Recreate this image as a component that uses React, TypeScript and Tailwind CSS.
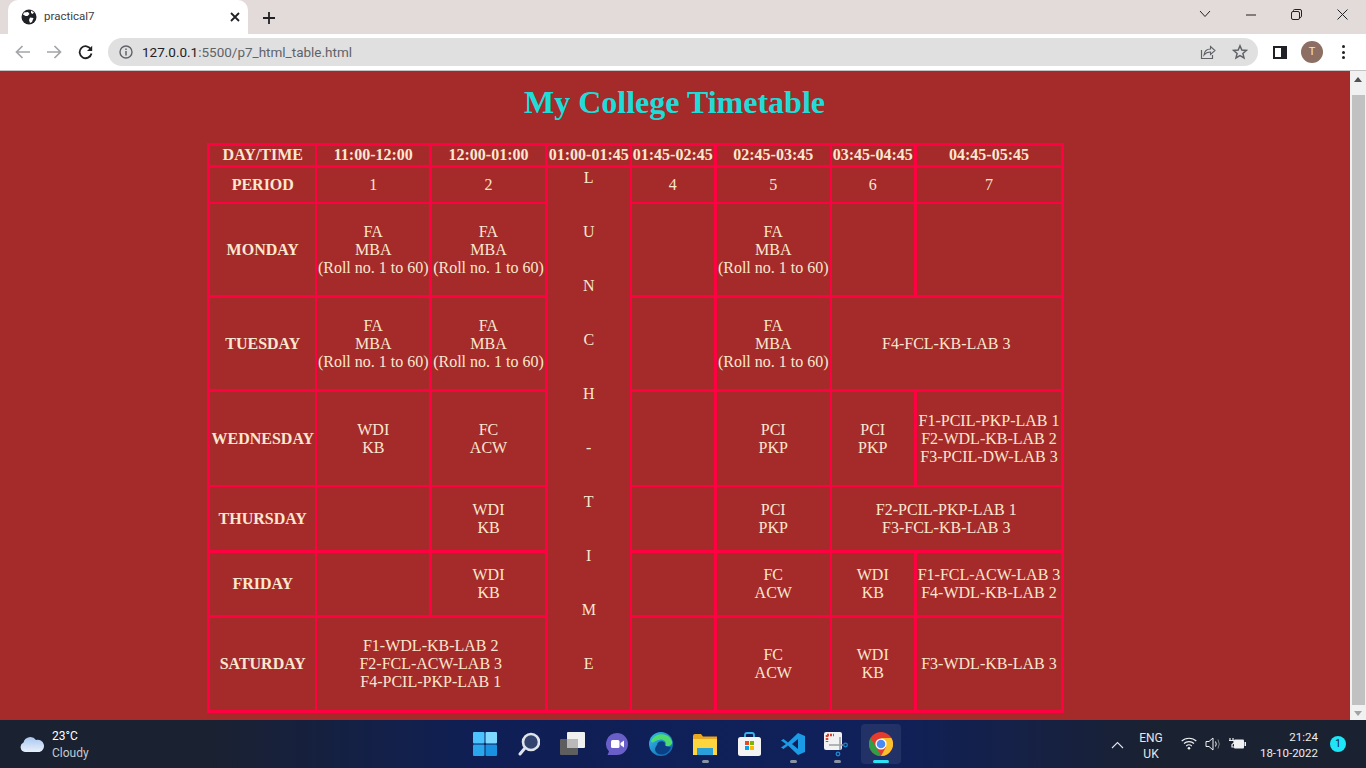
import React from "react";

const Br = ({ lines }: { lines: string[] }) => (
  <>
    {lines.map((l, i) => (
      <React.Fragment key={i}>
        {i > 0 && <br />}
        {l}
      </React.Fragment>
    ))}
  </>
);

const thinV = [1, 4, 6];
const thinH = [2, 5];

type CellProps = {
  c: number;
  r: number;
  cs?: number;
  rs?: number;
  head?: boolean;
  top?: boolean;
  lines?: string[];
  children?: React.ReactNode;
};

function Cell({ c, r, cs = 1, rs = 1, head, top, lines, children }: CellProps) {
  const cls = [
    "border-solid border-[#ff0040] p-0 text-[#f9e7cf] text-center",
    top ? "align-top" : "align-middle",
    head ? "font-bold" : "font-normal",
    r === 0 ? "pb-[1px]" : "",
    r === 2 || r === 4 || r === 5 ? "pt-[2px]" : "",
    c <= 1 && cs === 1 ? "pl-[1px]" : "",
    thinV.includes(c) ? "border-l-2" : "border-l-[3px]",
    thinV.includes(c + cs) ? "border-r-2" : "border-r-[3px]",
    thinH.includes(r) ? "border-t-2" : "border-t-[3px]",
    thinH.includes(r + rs) ? "border-b-2" : "border-b-[3px]",
  ].join(" ");
  return (
    <td colSpan={cs} rowSpan={rs} className={cls}>
      {lines ? <Br lines={lines} /> : children}
    </td>
  );
}

const FA = ["FA", "MBA", "(Roll no. 1 to 60)"];
const HEAD = ["DAY/TIME", "11:00-12:00", "12:00-01:00", "01:00-01:45", "01:45-02:45", "02:45-03:45", "03:45-04:45", "04:45-05:45"];

function Table() {
  const lunch = "LUNCH-TIME".split("");
  return (
    <table className="border-collapse table-fixed w-[854px] ml-[207px] text-[16px] leading-[18px]">
      <colgroup>
        <col className="w-[107px]" />
        <col className="w-[115px]" />
        <col className="w-[116px]" />
        <col className="w-[84px]" />
        <col className="w-[85px]" />
        <col className="w-[115px]" />
        <col className="w-[85px]" />
        <col className="w-[147px]" />
      </colgroup>
      <tbody>
        <tr className="h-[22px]">
          {HEAD.map((h, i) => (
            <Cell key={h} c={i} r={0} head lines={[h]} />
          ))}
        </tr>
        <tr className="h-[36px]">
          <Cell c={0} r={1} head lines={["PERIOD"]} />
          <Cell c={1} r={1} lines={["1"]} />
          <Cell c={2} r={1} lines={["2"]} />
          <Cell c={3} r={1} rs={7} top>
            <div className="pt-[1px]">
              {lunch.map((c, i) => (
                <div key={i} className="h-[54px]">{c}</div>
              ))}
            </div>
          </Cell>
          <Cell c={4} r={1} lines={["4"]} />
          <Cell c={5} r={1} lines={["5"]} />
          <Cell c={6} r={1} lines={["6"]} />
          <Cell c={7} r={1} lines={["7"]} />
        </tr>
        <tr className="h-[94px]">
          <Cell c={0} r={2} head lines={["MONDAY"]} />
          <Cell c={1} r={2} lines={FA} />
          <Cell c={2} r={2} lines={FA} />
          <Cell c={4} r={2} />
          <Cell c={5} r={2} lines={FA} />
          <Cell c={6} r={2} />
          <Cell c={7} r={2} />
        </tr>
        <tr className="h-[94px]">
          <Cell c={0} r={3} head lines={["TUESDAY"]} />
          <Cell c={1} r={3} lines={FA} />
          <Cell c={2} r={3} lines={FA} />
          <Cell c={4} r={3} />
          <Cell c={5} r={3} lines={FA} />
          <Cell c={6} r={3} cs={2} lines={["F4-FCL-KB-LAB 3"]} />
        </tr>
        <tr className="h-[95px]">
          <Cell c={0} r={4} head lines={["WEDNESDAY"]} />
          <Cell c={1} r={4} lines={["WDI", "KB"]} />
          <Cell c={2} r={4} lines={["FC", "ACW"]} />
          <Cell c={4} r={4} />
          <Cell c={5} r={4} lines={["PCI", "PKP"]} />
          <Cell c={6} r={4} lines={["PCI", "PKP"]} />
          <Cell c={7} r={4} lines={["F1-PCIL-PKP-LAB 1", "F2-WDL-KB-LAB 2", "F3-PCIL-DW-LAB 3"]} />
        </tr>
        <tr className="h-[66px]">
          <Cell c={0} r={5} head lines={["THURSDAY"]} />
          <Cell c={1} r={5} />
          <Cell c={2} r={5} lines={["WDI", "KB"]} />
          <Cell c={4} r={5} />
          <Cell c={5} r={5} lines={["PCI", "PKP"]} />
          <Cell c={6} r={5} cs={2} lines={["F2-PCIL-PKP-LAB 1", "F3-FCL-KB-LAB 3"]} />
        </tr>
        <tr className="h-[65px]">
          <Cell c={0} r={6} head lines={["FRIDAY"]} />
          <Cell c={1} r={6} />
          <Cell c={2} r={6} lines={["WDI", "KB"]} />
          <Cell c={4} r={6} />
          <Cell c={5} r={6} lines={["FC", "ACW"]} />
          <Cell c={6} r={6} lines={["WDI", "KB"]} />
          <Cell c={7} r={6} lines={["F1-FCL-ACW-LAB 3", "F4-WDL-KB-LAB 2"]} />
        </tr>
        <tr className="h-[95px]">
          <Cell c={0} r={7} head lines={["SATURDAY"]} />
          <Cell c={1} r={7} cs={2} lines={["F1-WDL-KB-LAB 2", "F2-FCL-ACW-LAB 3", "F4-PCIL-PKP-LAB 1"]} />
          <Cell c={4} r={7} />
          <Cell c={5} r={7} lines={["FC", "ACW"]} />
          <Cell c={6} r={7} lines={["WDI", "KB"]} />
          <Cell c={7} r={7} lines={["F3-WDL-KB-LAB 3"]} />
        </tr>
      </tbody>
    </table>
  );
}

const TabBar = () => (
  <div className="h-[34px] bg-[#e3dbd9] flex items-end relative">
    <div className="ml-[8px] w-[240px] h-[34px] bg-white rounded-t-[10px] flex items-center relative">
      <svg className="ml-[13px]" width="16" height="16" viewBox="0 0 16 16">
        <circle cx="8" cy="8" r="7.5" fill="#202124" />
        <path d="M3 3.5 L7 3 L8.5 5 L6.5 7 L4.5 7 L2 5.5 Z M9 8.5 L12.5 9 L11 13 L9 14 L8 11 Z M10 1.5 L13 3.5 L11.5 5 L10 4 Z" fill="#fff" />
      </svg>
      <span className="ml-[7px] text-[11.5px] text-[#3c4043] font-['Roboto','Liberation_Sans',sans-serif]">practical7</span>
      <svg className="absolute left-[222px] top-[12px]" width="10" height="10" viewBox="0 0 10 10">
        <path d="M1 1 L9 9 M9 1 L1 9" stroke="#202124" strokeWidth="1.8" />
      </svg>
    </div>
    <svg className="ml-[15px] mb-[10px]" width="12" height="12" viewBox="0 0 12 12">
      <path d="M6 0 V12 M0 6 H12" stroke="#202124" strokeWidth="1.8" />
    </svg>
    <div className="absolute right-0 top-0 h-[30px] flex items-center">
      <svg className="absolute right-[155px] top-[10px]" width="12" height="8" viewBox="0 0 12 8">
        <path d="M1 1 L6 6.5 L11 1" stroke="#202124" fill="none" />
      </svg>
      <svg className="absolute right-[109px] top-[14px]" width="12" height="2" viewBox="0 0 12 2">
        <path d="M1 1 H11" stroke="#202124" />
      </svg>
      <svg className="absolute right-[64px] top-[9px]" width="11" height="11" viewBox="0 0 11 11">
        <rect x="0.5" y="2.5" width="8" height="8" rx="1.5" stroke="#202124" fill="none" />
        <path d="M2.5 2.5 V1.5 Q2.5 0.5 3.5 0.5 H9 Q10.5 0.5 10.5 2 V7.5 Q10.5 8.5 8.5 8.5" stroke="#202124" fill="none" />
      </svg>
      <svg className="absolute right-[18px] top-[9px]" width="11" height="11" viewBox="0 0 11 11">
        <path d="M0.5 0.5 L10.5 10.5 M10.5 0.5 L0.5 10.5" stroke="#202124" />
      </svg>
    </div>
  </div>
);

const Toolbar = () => (
  <div className="h-[37px] bg-white border-b border-[#c4c4c4] flex items-center">
    <svg className="ml-[15px]" width="16" height="14" viewBox="0 0 16 14">
      <path d="M15 7 H2 M7.5 1 L1.5 7 L7.5 13" stroke="#a3a5a8" strokeWidth="1.7" fill="none" />
    </svg>
    <svg className="ml-[15px]" width="16" height="14" viewBox="0 0 16 14">
      <path d="M1 7 H14 M8.5 1 L14.5 7 L8.5 13" stroke="#a3a5a8" strokeWidth="1.7" fill="none" />
    </svg>
    <svg className="ml-[16px]" width="15" height="15" viewBox="0 0 15 15">
      <path d="M13 4.5 A6 6 0 1 0 13.5 8.5" stroke="#202124" strokeWidth="1.8" fill="none" />
      <path d="M14.2 0.8 V6 H9 Z" fill="#202124" />
    </svg>
    <div className="ml-[15px] w-[1150px] h-[28px] rounded-full bg-[#e0e0e0] flex items-center relative">
      <svg className="ml-[11px]" width="14" height="14" viewBox="0 0 14 14">
        <circle cx="7" cy="7" r="6" stroke="#5f6368" strokeWidth="1.4" fill="none" />
        <path d="M7 6 V10.5 M7 3.5 V5" stroke="#5f6368" strokeWidth="1.5" />
      </svg>
      <span className="ml-[9px] text-[13.5px] text-[#5f6368] font-['Roboto','Liberation_Sans',sans-serif]">
        <span className="text-[#202124]">127.0.0.1</span>:5500/p7_html_table.html
      </span>
      <svg className="absolute left-[1092px] top-[6px]" width="16" height="16" viewBox="0 0 16 16">
        <path d="M1.5 6 V14.5 H12.5 V11" stroke="#5f6368" strokeWidth="1.2" fill="none" />
        <path d="M4 11 C4.5 7 7.5 5 10.5 5 V2.5 L15 6.5 L10.5 10.5 V8 C8 8 5.5 9 4 11 Z" stroke="#5f6368" strokeWidth="1.1" fill="none" />
      </svg>
      <svg className="absolute left-[1124px] top-[6px]" width="16" height="16" viewBox="0 0 16 16">
        <path d="M8 1.8 L9.8 6 L14.4 6.4 L10.9 9.4 L12 13.9 L8 11.5 L4 13.9 L5.1 9.4 L1.6 6.4 L6.2 6 Z" stroke="#5f6368" strokeWidth="1.5" fill="none" />
      </svg>
    </div>
    <div className="ml-[15px] w-[14px] h-[13px] bg-[#202124] flex">
      <div className="ml-[2px] mt-[2px] w-[6px] h-[9px] bg-white" />
    </div>
    <div className="ml-[14px] w-[22px] h-[22px] rounded-full bg-[#8d6e63] flex items-center justify-center text-[11px] text-[#f1e4de] font-['Roboto','Liberation_Sans',sans-serif]">T</div>
    <div className="ml-[19px] flex flex-col gap-[2.5px]">
      <div className="w-[3px] h-[3px] rounded-full bg-[#202124]" />
      <div className="w-[3px] h-[3px] rounded-full bg-[#202124]" />
      <div className="w-[3px] h-[3px] rounded-full bg-[#202124]" />
    </div>
  </div>
);

const Scrollbar = () => (
  <div className="w-[16px] bg-[#f1f1f1] flex flex-col items-center">
    <svg className="mt-[6px]" width="8" height="5" viewBox="0 0 8 5"><path d="M4 0 L8 5 H0 Z" fill="#505050" /></svg>
    <div className="mt-[13px] w-[13px] h-[610px] bg-[#c1c1c1]" />
    <svg className="mt-[6px]" width="8" height="5" viewBox="0 0 8 5"><path d="M0 0 H8 L4 5 Z" fill="#a3a3a3" /></svg>
  </div>
);

const TrayDot = () => <div className="w-[7px] h-[3px] rounded-full bg-[#8a93a3]" />;

const Slot = ({ children, dot, active }: { children: React.ReactNode; dot?: boolean; active?: boolean }) => (
  <div className={`w-[40px] h-[40px] flex items-center justify-center relative rounded-[4px] ${active ? "bg-[#ffffff14]" : ""}`}>
    {children}
    {dot && <div className="absolute bottom-[1px] left-[17px]"><TrayDot /></div>}
    {active && <div className="absolute bottom-[1px] left-[12px] w-[16px] h-[3px] rounded-full bg-[#2de2f5]" />}
  </div>
);

const Taskbar = () => (
  <div className="h-[48px] flex items-center relative bg-[linear-gradient(90deg,#1a2130_0%,#1a2130_15%,#0f1f55_35%,#10205a_65%,#1a2130_85%,#1a2130_100%)] font-['Roboto','Liberation_Sans',sans-serif]">
    <svg className="ml-[19px]" width="26" height="18" viewBox="0 0 26 18">
      <defs>
        <linearGradient id="cl" x1="0" y1="0" x2="0" y2="1">
          <stop offset="0" stopColor="#a9c6ee" />
          <stop offset="1" stopColor="#e8f0fc" />
        </linearGradient>
      </defs>
      <path d="M6 17 A5 5 0 0 1 4.5 7.5 A7 7 0 0 1 17 5 A6 6 0 0 1 20.5 17 Z" fill="url(#cl)" />
    </svg>
    <div className="ml-[7px] mt-[2px] text-[12px] leading-[17px] text-white">
      <div>23°C</div>
      <div className="text-[#c6c9ce]">Cloudy</div>
    </div>
    <div className="absolute left-[465px] top-[4px] flex items-center gap-[4px]">
      <Slot>
        <svg width="24" height="24" viewBox="0 0 24 24">
          <rect x="0" y="0" width="11.5" height="11.5" rx="1" fill="#4cc2ff" />
          <rect x="12.5" y="0" width="11.5" height="11.5" rx="1" fill="#7fd8ff" />
          <rect x="0" y="12.5" width="11.5" height="11.5" rx="1" fill="#2aa6ec" />
          <rect x="12.5" y="12.5" width="11.5" height="11.5" rx="1" fill="#1a90e0" />
        </svg>
      </Slot>
      <Slot>
        <svg width="22" height="24" viewBox="0 0 22 24">
          <circle cx="13" cy="10" r="8" stroke="#dfe3ea" strokeWidth="2.6" fill="#33436f" />
          <path d="M7 16 L2 22" stroke="#dfe3ea" strokeWidth="3" strokeLinecap="round" />
        </svg>
      </Slot>
      <Slot>
        <svg width="26" height="24" viewBox="0 0 26 24">
          <rect x="0" y="7" width="18" height="16" rx="1" fill="#5e5e5e" />
          <rect x="7" y="0" width="18" height="16" rx="1" fill="#f0f0f0" />
          <rect x="7" y="7" width="11" height="9" fill="#b9b9b9" />
        </svg>
      </Slot>
      <Slot>
        <svg width="24" height="24" viewBox="0 0 24 24">
          <path d="M12 1 A11 11 0 1 1 12 23 H2.5 L4 19.5 A11 11 0 0 1 12 1 Z" fill="#6a5fc8" />
          <rect x="6" y="8" width="8.5" height="8" rx="1.5" fill="#fff" />
          <path d="M15.5 11 L19 8.5 V15.5 L15.5 13 Z" fill="#fff" />
        </svg>
      </Slot>
      <Slot>
        <svg width="24" height="24" viewBox="0 0 24 24">
          <defs>
            <linearGradient id="ed1" x1="0" y1="0" x2="1" y2="1">
              <stop offset="0" stopColor="#35c1f1" />
              <stop offset="1" stopColor="#0c59a4" />
            </linearGradient>
          </defs>
          <circle cx="12" cy="12" r="12" fill="url(#ed1)" />
          <path d="M2 9 C5 1 19 -1 23 9 C24 13 20 15 16 14 C19 10 14 6 9 8 C5 9.5 3.5 12 2 9 Z" fill="#4fdc6e" />
          <path d="M8 13 C8 9 14 8 16 11 C15 14 18 15 22 15 C19 24 8 25 6 18 C6 16 7 14 8 13 Z" fill="#0b3f86" />
        </svg>
      </Slot>
      <Slot dot>
        <svg width="24" height="21" viewBox="0 0 24 21">
          <path d="M0 2 Q0 0 2 0 H8 L10 2.5 H24 V21 H0 Z" fill="#e9a820" />
          <rect x="0" y="5" width="24" height="16" fill="#fcd53f" />
          <rect x="4" y="14" width="16" height="7" fill="#2a9fd8" />
        </svg>
      </Slot>
      <Slot>
        <svg width="23" height="24" viewBox="0 0 23 24">
          <path d="M7 6 V3 Q7 1 9 1 H14 Q16 1 16 3 V6" stroke="#35b5ee" strokeWidth="1.8" fill="none" />
          <rect x="0" y="5" width="23" height="19" rx="2.5" fill="#f4f4f4" />
          <rect x="7" y="9" width="4" height="4" fill="#e8491f" />
          <rect x="12" y="9" width="4" height="4" fill="#7ab800" />
          <rect x="7" y="14" width="4" height="4" fill="#00a4ef" />
          <rect x="12" y="14" width="4" height="4" fill="#ffb900" />
        </svg>
      </Slot>
      <Slot dot>
        <svg width="24" height="24" viewBox="0 0 24 24">
          <path d="M17 1 L24 4 V20 L17 23 L7 13.5 L2.5 17 L0 15.5 L5 12 L0 8.5 L2.5 7 L7 10.5 Z M17 7 L11 12 L17 17 Z" fill="#1b9ae5" fillRule="evenodd" />
        </svg>
      </Slot>
      <Slot dot>
        <svg width="26" height="25" viewBox="0 0 26 25">
          <rect x="0" y="0" width="18" height="18" rx="2" fill="#f2f2f2" />
          <path d="M3 3 H10 M3 3 V10" stroke="#d8412f" strokeWidth="2.5" strokeDasharray="2 1" fill="none" />
          <path d="M5 13 H19 M16 5 V18" stroke="#9aa0a6" strokeWidth="1.6" />
          <circle cx="21.5" cy="13" r="1.8" stroke="#1c8ad0" strokeWidth="1.3" fill="none" />
          <circle cx="14" cy="22" r="1.8" stroke="#1c8ad0" strokeWidth="1.3" fill="none" />
        </svg>
      </Slot>
      <Slot active>
        <svg width="24" height="24" viewBox="0 0 24 24">
          <circle cx="12" cy="12" r="12" fill="#e53c2e" />
          <path d="M12 24 A12 12 0 0 1 1.6 6 L7 15 Z" fill="#2f9e44" />
          <path d="M12 24 A12 12 0 0 0 22.4 6 H12 L17 15 Z" fill="#fbc02d" />
          <circle cx="12" cy="12" r="5.6" fill="#fff" />
          <circle cx="12" cy="12" r="4.3" fill="#4a8af4" />
        </svg>
      </Slot>
    </div>
    <svg className="absolute left-[1111px] top-[21px]" width="13" height="8" viewBox="0 0 13 8">
      <path d="M1 7 L6.5 1.5 L12 7" stroke="#e3e5e8" strokeWidth="1.1" fill="none" />
    </svg>
    <div className="absolute left-[1139px] top-[10px] w-[24px] text-center text-[12px] leading-[16px] text-[#e6e7ea]">
      <div>ENG</div>
      <div>UK</div>
    </div>
    <svg className="absolute left-[1181px] top-[17px]" width="16" height="13" viewBox="0 0 16 13">
      <path d="M0.7 4 C4.5 0.3 11.5 0.3 15.3 4 M3 6.5 C5.5 4 10.5 4 13 6.5 M5.2 9 C6.8 7.6 9.2 7.6 10.8 9" stroke="#f0f1f3" strokeWidth="1.1" fill="none" />
      <circle cx="8" cy="11.3" r="1.3" fill="#f0f1f3" />
    </svg>
    <svg className="absolute left-[1205px] top-[17px]" width="17" height="14" viewBox="0 0 17 14">
      <path d="M1 4.5 H4 L8 1 V13 L4 9.5 H1 Z" stroke="#f0f1f3" fill="none" />
      <path d="M10.5 4.5 Q12 7 10.5 9.5" stroke="#f0f1f3" fill="none" />
      <path d="M13 2.5 Q15.5 7 13 11.5" stroke="#7b8088" fill="none" />
    </svg>
    <svg className="absolute left-[1229px] top-[17px]" width="17" height="13" viewBox="0 0 17 13">
      <path d="M1 1 V3.5 M4 1 V3.5 M0 3.5 H5 V6 L3 7.5 V10 H5" stroke="#f0f1f3" strokeWidth="1.2" fill="none" />
      <rect x="5" y="2.5" width="10" height="9" rx="1" fill="#f0f1f3" />
      <rect x="15.5" y="5" width="1.5" height="4" fill="#f0f1f3" />
    </svg>
    <div className="absolute left-[1255px] top-[9px] w-[63px] text-right text-[11.5px] leading-[16px] text-[#eceef0]">
      <div>21:24</div>
      <div>18-10-2022</div>
    </div>
    <div className="absolute left-[1330px] top-[16px] w-[16px] h-[16px] rounded-full bg-[#1fe6f7] text-[#0b1830] text-[10px] leading-[16px] text-center">1</div>
  </div>
);

export default function App() {
  return (
    <div className="w-[1366px] h-[768px] overflow-hidden flex flex-col">
      <TabBar />
      <Toolbar />
      <div className="flex h-[649px]">
        <main className="w-[1350px] bg-[#a52a2a] font-['Liberation_Serif',serif] overflow-hidden">
          <h1 className="text-[32px] leading-[37px] font-bold text-center text-[#20dcd8] mt-[13px] mb-[22px] -ml-[1px]">My College Timetable</h1>
          <Table />
        </main>
        <Scrollbar />
      </div>
      <Taskbar />
    </div>
  );
}
